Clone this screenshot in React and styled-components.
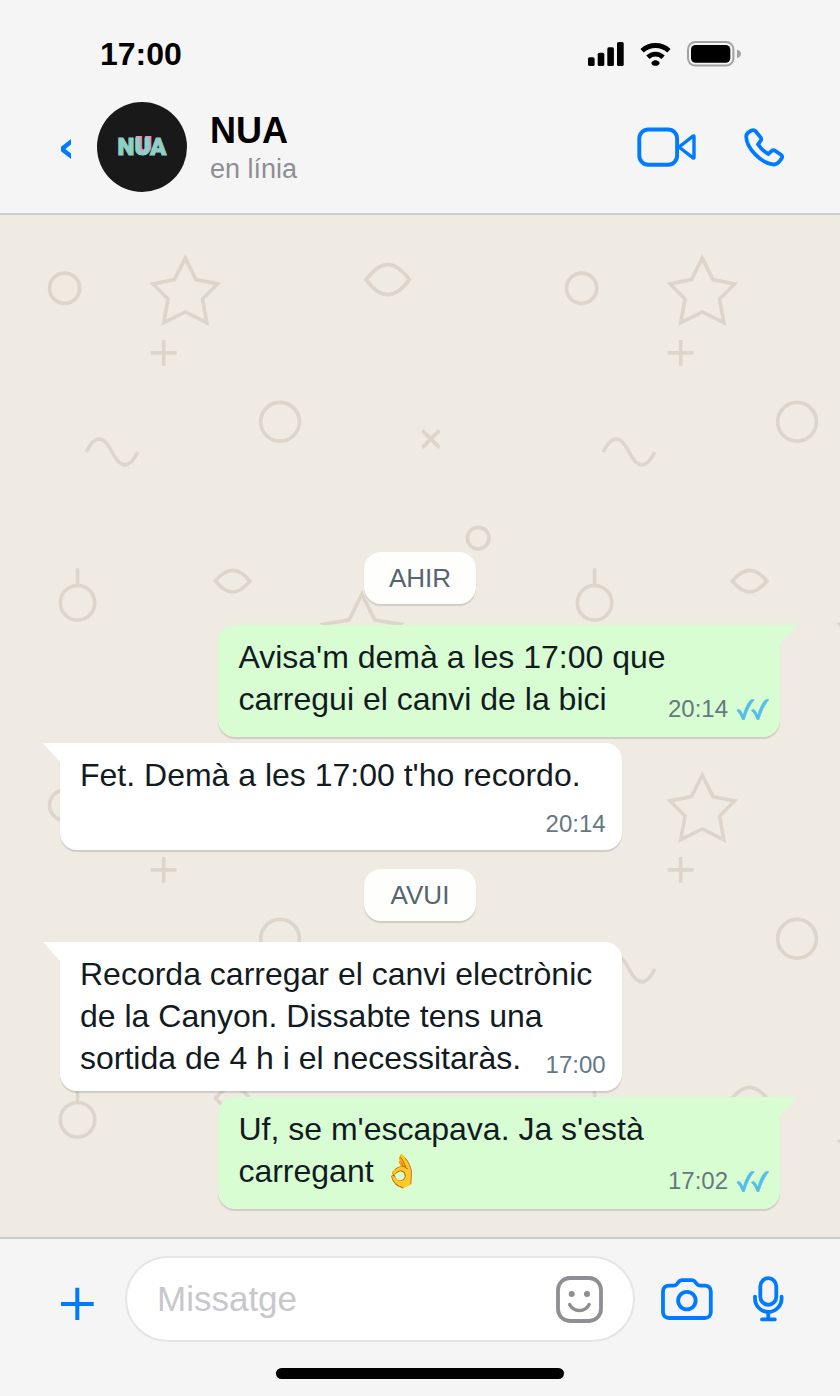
import { useState } from "react";
import { styled, createGlobalStyle } from "styled-components";

const blue = "#007aff";

// chat wallpaper, drawn on a 240 x 240 tile
const doodles = `
<svg xmlns="http://www.w3.org/2000/svg" viewBox="0 0 240 240" width="517" height="517">
  <g fill="none" stroke="#ddd5c9" stroke-width="1.7">
    <circle cx="30" cy="34" r="7"/>
    <path d="M86 20l5 10 10 2-7 7 2 11-10-5-10 5 2-11-7-7 10-2z"/>
    <path d="M170 30q10-14 20 0q-10 14-20 0z"/>
    <path d="M76 58v12M70 64h12"/>
    <circle cx="130" cy="96" r="9"/>
    <path d="M40 110q6-12 12 0t12 0"/>
    <path d="M196 100l8 8M204 100l-8 8"/>
    <circle cx="222" cy="150" r="5"/>
    <path d="M36 164v8"/>
    <circle cx="36" cy="180" r="8"/>
    <path d="M100 170q8-10 16 0q-8 10-16 0z"/>
    <path d="M168 176l6 12 12 2-9 8 2 13-11-6-11 6 2-13-9-8 12-2z"/>
  </g>
</svg>`;

const wallpaper = `url("data:image/svg+xml,${encodeURIComponent(doodles)}")`;

const GlobalStyle = createGlobalStyle`
  * {
    box-sizing: border-box;
  }
  body {
    margin: 0;
    font-family: "Liberation Sans", Arial, Helvetica, sans-serif;
    background-color: #f5f5f5;
  }
`;

const Phone = styled.div`
  display: flex;
  flex-direction: column;
  min-height: 100vh;
  background-color: #f5f5f5;
`;

const Header = styled.header`
  border-bottom: 2px solid #cdcdd0;
`;

const StatusBar = styled.div`
  display: flex;
  align-items: center;
  justify-content: space-between;
  padding: 34px 99px 0 100px;
  font-size: 32px;
  line-height: 40px;
  font-weight: 700;
  color: black;
`;

const StatusIcons = styled.div`
  display: flex;
  align-items: center;
  gap: 16px;
`;

const NavBar = styled.div`
  display: flex;
  align-items: center;
  padding: 28px 56px 21px 60px;
`;

const IconButton = styled.button`
  display: flex;
  flex: none;
  padding: 0;
  border: none;
  background: none;
  color: ${(props) => props.$color || blue};
  cursor: pointer;
`;

const Avatar = styled.div`
  display: flex;
  flex: none;
  align-items: center;
  justify-content: center;
  width: 90px;
  height: 90px;
  margin: 0 23px 0 25px;
  border-radius: 50%;
  background-color: #191919;
`;

const Logo = styled.span`
  font-family: Roboto, "Liberation Sans", sans-serif;
  font-size: 24px;
  font-weight: 900;
  line-height: 28px;
  color: #8fd0c4;
  -webkit-text-stroke: 1px #8fd0c4;
`;

const LogoAccent = styled.span`
  text-shadow: 0 -2px #e593c9, 2px -2px #e593c9;
`;

const Contact = styled.div`
  flex: 1;
  min-width: 0;
`;

const Name = styled.h1`
  margin: 0;
  font-size: 36px;
  line-height: 44px;
  font-weight: 700;
  color: black;
`;

const Presence = styled.p`
  margin: 0;
  font-size: 27px;
  line-height: 32px;
  color: #8e8e93;
`;

const Calls = styled.div`
  display: flex;
  align-items: center;
  gap: 48px;
`;

const Chat = styled.main`
  display: flex;
  flex: 1;
  flex-direction: column;
  justify-content: flex-end;
  gap: 6px;
  padding: 28px 60px;
  background-color: #efeae2;
  background-image: ${wallpaper};
  background-size: 517px 517px;
`;

const Day = styled.div`
  align-self: center;
  min-width: 112px;
  margin: 13px 0 15px;
  padding: 0 25px;
  border-radius: 17px;
  background-color: #fefefc;
  box-shadow: 0 2px 1px rgba(0, 0, 0, 0.13);
  font-size: 26px;
  line-height: 52px;
  text-align: center;
  color: #54656f;
`;

const Bubble = styled.div`
  position: relative;
  display: flow-root;
  align-self: ${(props) => (props.$out ? "flex-end" : "flex-start")};
  max-width: 78%;
  padding: ${(props) => (props.$out ? "11px 11px 14px 20px" : "11px 16px 12px 20px")};
  border-radius: ${(props) => (props.$out ? "17px 0 17px 17px" : "0 17px 17px 17px")};
  background-color: ${(props) => (props.$out ? "#d9fdd3" : "#ffffff")};
  box-shadow: 0 2px 1px rgba(0, 0, 0, 0.13);
  font-size: 32px;
  line-height: 42px;
  color: #111b21;

  &::before {
    content: "";
    position: absolute;
    top: 0;
    ${(props) => (props.$out ? "left: 100%;" : "right: 100%;")}
    width: 17px;
    height: 19px;
    background-color: inherit;
    clip-path: ${(props) => (props.$out ? "polygon(0 0, 100% 0, 0 100%)" : "polygon(0 0, 100% 0, 100% 100%)")};
  }
`;

const Meta = styled.span`
  display: flex;
  float: right;
  align-items: center;
  gap: 8px;
  margin-top: ${(props) => (props.$out ? "17px" : "14px")};
  margin-left: 16px;
  font-size: 24px;
  line-height: 28px;
  color: #667781;
`;

const Footer = styled.footer`
  padding: 17px 0;
  border-top: 2px solid #cdcdd0;
`;

const Composer = styled.form`
  display: flex;
  align-items: center;
  padding: 0 56px 0 61px;
`;

const Field = styled.div`
  display: flex;
  flex: 1;
  align-items: center;
  min-width: 0;
  height: 86px;
  margin: 0 26px 0 31px;
  padding: 0 30px 0 30px;
  border: 2px solid #e4e4e9;
  border-radius: 43px;
  background-color: white;
`;

const TextInput = styled.input`
  flex: 1;
  min-width: 0;
  padding: 0;
  border: none;
  outline: none;
  background: none;
  font-family: inherit;
  font-size: 35px;
  line-height: 44px;
  color: #111b21;

  &::placeholder {
    color: #c7c7cc;
    opacity: 1;
  }
`;

const Tools = styled.div`
  display: flex;
  align-items: center;
  gap: 40px;
`;

const HomeBar = styled.div`
  width: 288px;
  height: 11px;
  margin: 26px auto 0;
  border-radius: 6px;
  background-color: black;
`;

function Signal() {
  return (
    <svg width="36" height="24" viewBox="0 0 36 24" aria-hidden="true">
      <rect x="0" y="15.3" width="6.6" height="8.7" rx="1.6" />
      <rect x="9.7" y="10.7" width="6.6" height="13.3" rx="1.6" />
      <rect x="19.3" y="5.3" width="6.6" height="18.7" rx="1.6" />
      <rect x="29" y="0" width="6.7" height="24" rx="1.6" />
    </svg>
  );
}

function Wifi() {
  return (
    <svg width="31" height="24" viewBox="0.5 0 31 24" fill="none" stroke="black" strokeWidth="4.8" aria-hidden="true">
      <path d="M2.6 8.8C10 1.7 22 1.7 29.4 8.8" />
      <path d="M8.4 15.2C12.8 11 19.2 11 23.6 15.2" />
      <path d="M12.4 19.8C14.4 17.7 17.6 17.7 19.6 19.8C20.6 21 20 22.6 18.6 23.2C17 23.9 15 23.9 13.4 23.2C12 22.6 11.4 21 12.4 19.8Z" fill="black" stroke="none" />
    </svg>
  );
}

function Battery() {
  return (
    <svg width="54" height="26" viewBox="0 0 54 26" aria-hidden="true">
      <rect x="1" y="1" width="45.4" height="23.6" rx="7.4" fill="none" stroke="#a2a2a2" strokeWidth="2" />
      <rect x="4" y="4" width="39.3" height="17.8" rx="4.6" />
      <path d="M50 8.8C52.6 9.3 54 11 54 12.9C54 14.8 52.6 16.5 50 17Z" fill="#a2a2a2" />
    </svg>
  );
}

function BackIcon() {
  return (
    <svg width="12" height="26" viewBox="0 -4 12 26" fill="currentColor" aria-hidden="true">
      <path d="M11 1V6.6L5.4 11L11 15.4V21L1 13.2V8.8Z" />
    </svg>
  );
}

function VideoIcon() {
  return (
    <svg width="59" height="40" viewBox="0 0 59 40" fill="none" stroke="currentColor" strokeWidth="3.9" strokeLinejoin="round" aria-hidden="true">
      <rect x="2.3" y="2.5" width="37.8" height="35.2" rx="9" />
      <path d="M42 20L56 9.2C56.8 8.6 57 8.9 57 9.6V30.4C57 31.1 56.8 31.4 56 30.8Z" strokeWidth="3.4" />
    </svg>
  );
}

function PhoneIcon() {
  return (
    <svg width="40" height="39" viewBox="0 0 40 39" fill="none" stroke="currentColor" strokeWidth="3.8" aria-hidden="true">
      <path d="M2.2 8.5C2.2 6 3.8 4.4 6.5 3C8.6 1.9 10.2 1.6 11.6 3.2L16.6 9.4C17.5 10.6 17.5 11.6 16.6 12.9L14 16.3C16.6 20.4 20 23.6 24.4 26L27.4 23.2C28.6 22.1 29.8 22 31.2 22.8L37 26.8C38.4 27.9 38.4 29.4 37.4 30.8C35.4 34 33 36.6 29.6 36.5C17 35.5 2.4 20 2.2 8.5Z" />
    </svg>
  );
}

function PlusIcon() {
  return (
    <svg width="33" height="42" viewBox="0 0 33 42" stroke="currentColor" strokeWidth="4" aria-hidden="true">
      <path d="M16.3 9.7V42M0 25.9H32.7" />
    </svg>
  );
}

function SmileIcon() {
  return (
    <svg width="47" height="47" viewBox="0 0 47 47" fill="none" stroke="currentColor" strokeWidth="3.8" strokeLinecap="round" aria-hidden="true">
      <rect x="2" y="2" width="43" height="43" rx="12" />
      <circle cx="15.7" cy="18" r="3" fill="currentColor" stroke="none" />
      <circle cx="31" cy="18" r="3" fill="currentColor" stroke="none" />
      <path d="M13.6 28.6C17.6 36.5 29.2 36.5 33.2 28.6" strokeWidth="3.4" />
    </svg>
  );
}

function CameraIcon() {
  return (
    <svg width="52" height="42" viewBox="0 0 52 42" fill="none" stroke="currentColor" strokeWidth="3.8" aria-hidden="true">
      <path d="M8 7.6H12.6C14.4 7.6 15.2 7.2 16 6L17.6 3.8C18.5 2.5 19.3 2.1 20.8 2.1H31C32.5 2.1 33.3 2.5 34.2 3.8L35.8 6C36.6 7.2 37.4 7.6 39.2 7.6H43.7C47.4 7.6 49.8 9.8 49.8 13.4V34.2C49.8 37.8 47.4 40 43.7 40H8C4.4 40 2 37.8 2 34.2V13.4C2 9.8 4.4 7.6 8 7.6Z" />
      <circle cx="25.9" cy="22.6" r="8.8" />
    </svg>
  );
}

function MicIcon() {
  return (
    <svg width="31" height="46" viewBox="0 0 31 46" fill="none" stroke="currentColor" strokeWidth="3.8" strokeLinecap="round" aria-hidden="true">
      <rect x="7.3" y="2.2" width="16" height="26.6" rx="8" />
      <path d="M2 20.6V22.4C2 30 8 35.9 15.3 35.9C22.6 35.9 28.6 30 28.6 22.4V20.6" />
      <path d="M15.3 36V43.2M9 43.4H21.8" />
    </svg>
  );
}

function Ticks() {
  const tick = "M.8 12.4C2 11.2 3.6 11.4 4.6 12.8L7.2 17.2C9 10.4 11.8 5 14.4 2.2C15.4 1.6 16.8 1.4 18.2 1.6C13.6 7 10.6 14 8.3 21.5H6.4C5.2 18 3.2 14.2 .8 12.4Z";
  return (
    <svg width="33" height="22" viewBox="0 0 33 22" fill="#53bdeb" stroke="#53bdeb" strokeWidth="0.8" role="img" aria-label="Llegit">
      <path d={tick} />
      <path d={tick} transform="translate(14.6 0)" />
    </svg>
  );
}

const thread = [
  { id: 1, day: "AHIR" },
  { id: 2, out: true, text: "Avisa'm demà a les 17:00 que carregui el canvi de la bici", time: "20:14" },
  { id: 3, out: false, text: "Fet. Demà a les 17:00 t'ho recordo.", time: "20:14" },
  { id: 4, day: "AVUI" },
  { id: 5, out: false, text: "Recorda carregar el canvi electrònic de la Canyon. Dissabte tens una sortida de 4 h i el necessitaràs.", time: "17:00" },
  { id: 6, out: true, text: "Uf, se m'escapava. Ja s'està carregant 👌", time: "17:02" },
];

function Message({ item }) {
  return (
    <Bubble $out={item.out}>
      {item.text}
      <Meta $out={item.out}>
        <time>{item.time}</time>
        {item.out && <Ticks />}
      </Meta>
    </Bubble>
  );
}

function App() {
  const [draft, setDraft] = useState("");

  return (
    <Phone>
      <GlobalStyle />
      <Header>
        <StatusBar>
          <time>17:00</time>
          <StatusIcons>
            <Signal />
            <Wifi />
            <Battery />
          </StatusIcons>
        </StatusBar>
        <NavBar>
          <IconButton type="button" aria-label="Enrere"><BackIcon /></IconButton>
          <Avatar aria-hidden="true">
            <Logo>N<LogoAccent>U</LogoAccent>A</Logo>
          </Avatar>
          <Contact>
            <Name>NUA</Name>
            <Presence>en línia</Presence>
          </Contact>
          <Calls>
            <IconButton type="button" aria-label="Videotrucada"><VideoIcon /></IconButton>
            <IconButton type="button" aria-label="Trucada"><PhoneIcon /></IconButton>
          </Calls>
        </NavBar>
      </Header>

      <Chat>
        {thread.map((item) =>
          item.day ? <Day key={item.id}>{item.day}</Day> : <Message key={item.id} item={item} />
        )}
      </Chat>

      <Footer>
        <Composer onSubmit={(e) => e.preventDefault()}>
          <IconButton type="button" aria-label="Adjunta"><PlusIcon /></IconButton>
          <Field>
            <TextInput
              type="text"
              aria-label="Missatge"
              placeholder="Missatge"
              value={draft}
              onChange={(e) => setDraft(e.target.value)}
            />
            <IconButton type="button" $color="#8e8e93" aria-label="Adhesius"><SmileIcon /></IconButton>
          </Field>
          <Tools>
            <IconButton type="button" aria-label="Càmera"><CameraIcon /></IconButton>
            <IconButton type="button" aria-label="Missatge de veu"><MicIcon /></IconButton>
          </Tools>
        </Composer>
        <HomeBar />
      </Footer>
    </Phone>
  );
}

export default App;
